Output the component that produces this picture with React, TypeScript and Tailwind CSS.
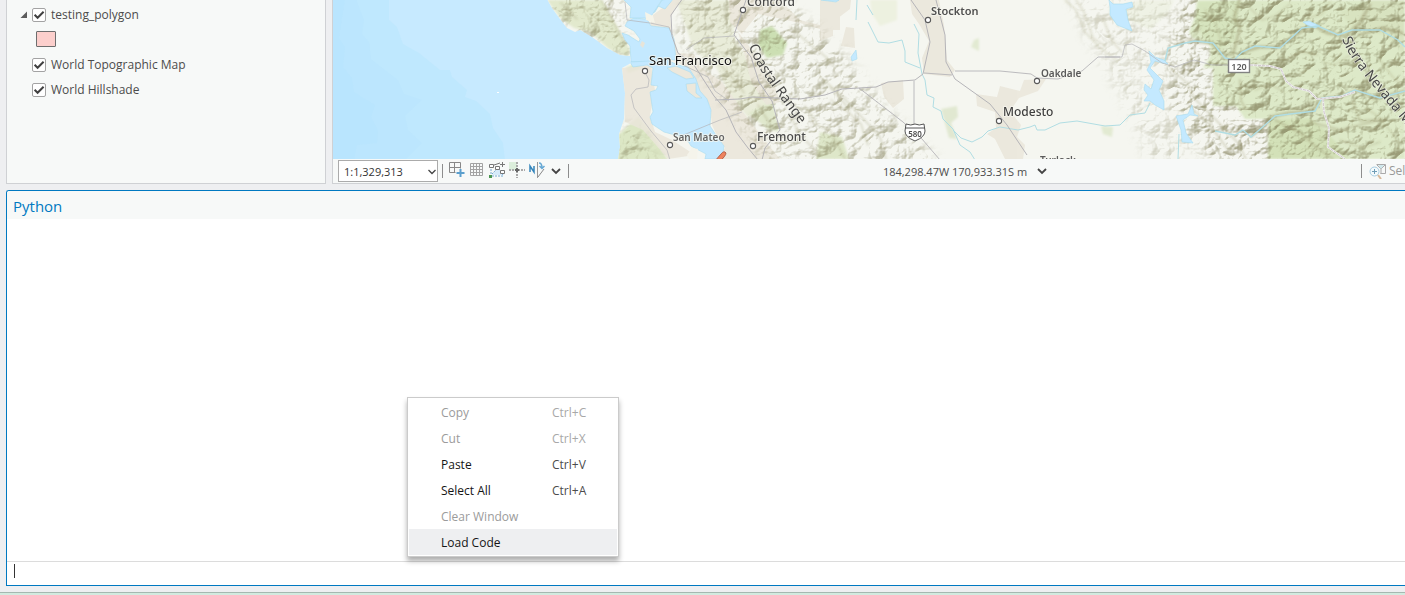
import type { ReactNode } from "react";

function Check({ label }: { label: string }) {
  return (
    <label className="flex items-center gap-[5px] text-xs text-[#4c4c4c]">
      <span className="relative flex size-3.5">
        <input
          type="checkbox"
          defaultChecked
          className="peer size-3.5 appearance-none rounded-[2px] border border-[#a3a3a3] bg-white"
        />
        <svg
          viewBox="0 0 14 14"
          className="pointer-events-none absolute inset-0 size-3.5 opacity-0 peer-checked:opacity-100"
          fill="none"
          stroke="#404040"
          strokeWidth="2"
        >
          <path d="M2.6 6.8 5.6 9.8 11.6 3.8" />
        </svg>
      </span>
      {label}
    </label>
  );
}

function Contents() {
  return (
    <aside className="w-80 shrink-0 border-x border-b border-[#cfd1d4] bg-[#f7f9f8] pt-0.5">
      <ul>
        <li>
          <div className="flex h-[25px] items-center gap-1 pl-[13px]">
            <button aria-label="Collapse testing_polygon" className="flex w-2">
              <svg viewBox="0 0 8 8" className="size-2">
                <path d="M7 0.500v6.500H.5z" fill="#5c5c5c" />
              </svg>
            </button>
            <Check label="testing_polygon" />
          </div>
          <div className="flex h-[25px] items-center pb-px pl-[29px]">
            <span className="h-4 w-5 rounded-[1px] border border-[#6e6e6e] bg-[#fccfcc]" />
          </div>
        </li>
        <li className="flex h-[25px] items-center pl-[25px]">
          <Check label="World Topographic Map" />
        </li>
        <li className="flex h-[25px] items-center pl-[25px]">
          <Check label="World Hillshade" />
        </li>
      </ul>
    </aside>
  );
}

const cities = [
  { name: "Concord", x: 747, y: 6, cx: 743, cy: 10, size: 12, weight: 500, color: "#4a4a4a" },
  { name: "San Francisco", x: 649, y: 65, cx: 645, cy: 71, size: 13, weight: 400, color: "#101010" },
  { name: "San Mateo", x: 673, y: 141, cx: 670, cy: 145, size: 10, weight: 600, color: "#666" },
  { name: "Fremont", x: 757, y: 141, cx: 753, cy: 146, size: 12, weight: 500, color: "#4a4a4a" },
  { name: "Stockton", x: 931, y: 15, cx: 928, cy: 20, size: 11, weight: 600, color: "#4f4f4f" },
  { name: "Oakdale", x: 1041, y: 77, cx: 1037, cy: 81, size: 10, weight: 600, color: "#5a5a5a" },
  { name: "Modesto", x: 1003, y: 116, cx: 999, cy: 121, size: 12, weight: 500, color: "#3f3f3f" },
  { name: "Turlock", x: 1040, y: 164, cx: 1035, cy: 168, size: 10, weight: 600, color: "#5a5a5a" },
];

function MapView() {
  return (
    <svg
      role="img"
      aria-label="Topographic map of central California"
      viewBox="333 0 1072 159"
      preserveAspectRatio="xMinYMin slice"
      className="block h-[159px] w-full bg-[#c7eaff] font-['Noto_Sans',sans-serif]"
    >
      <defs>
        <filter id="relief" x="0" y="0" width="100%" height="100%" colorInterpolationFilters="sRGB">
          <feTurbulence type="turbulence" baseFrequency="0.035 0.045" numOctaves="4" seed="12" />
          <feColorMatrix values="0 0 0 0 0 0 0 0 0 0 0 0 0 0 0 1 0 0 0 0" />
          <feGaussianBlur stdDeviation="0.5" />
          <feDiffuseLighting surfaceScale="6" diffuseConstant="1" lightingColor="#fff">
            <feDistantLight azimuth="225" elevation="45" />
          </feDiffuseLighting>
          <feColorMatrix values="0 0 0 0 0.5 0 0 0 0 0.49 0 0 0 0 0.34 -0.95 0 0 0 0.7" />
        </filter>
        <filter id="soft" x="-20%" y="-20%" width="140%" height="140%">
          <feGaussianBlur stdDeviation="6" />
        </filter>
        <filter id="fine" x="-5%" y="-5%" width="110%" height="110%">
          <feGaussianBlur stdDeviation="0.8" />
        </filter>
        <mask id="hills" maskUnits="userSpaceOnUse" x="333" y="0" width="1072" height="159">
          <g filter="url(#soft)">
            <path d="M545-10 620-10 625 20 630 55 610 55 540 5Z" fill="#ccc" />
            <path d="M618 130 632 125 662 165 615 165Z" fill="#aaa" />
            <path d="M690-10 775-10 840 50 880 100 940 165 765 165 745 130 720 95 690 55 675 40Z" fill="#bbb" />
            <path d="M1065-10 1195-10 1195 165 1150 165 1120 95 1085 35Z" fill="#666" />
            <path d="M1190-10 1420-10 1420 170 1215 170 1175 100 1170 45Z" fill="#fff" />
          </g>
        </mask>
        <clipPath id="land">
          <path d="M547-1H1406V160H618L620 147 619 134 624 119 625 93 622 68 631 63 630 56 620 55 607 48 592 37 580 30 575 32 567 28 560 19 552 8Z" />
        </clipPath>
        <path id="coastal-line" d="M749 46C755 66 775 91 806 133" />
        <path id="sierra-line" d="M1342 39C1351 63 1376 89 1412 132" />
      </defs>

      {/* Ocean depth bands */}
      <path d="M389-1H333V160H505L503 143 493 128 490 114 476 101 465 97 467 90 452 77 450 70 440 70 419 53 403 44 397 27 389 20Z" fill="#bfe8fe" />
      <path d="M356-1H333V160H405L422 143 408 130 405 116 422 100 404 94 398 80 371 59 369 42 362 34 364 20Z" fill="#bbe6fe" opacity=".7" />
      <path d="M345-1H333V160H354L357 145 377 143 378 130 371 117 375 105 354 92 352 78 343 67 345 47 339 38Z" fill="#b7e4fe" opacity=".6" />
      <path d="M497 92h2v1h-2z" fill="#fff" />

      <g clipPath="url(#land)">
        <rect x="540" y="0" width="865" height="159" fill="#f5f6f0" />

        {/* Vegetation */}
        <g filter="url(#fine)">
          <path d="M547 0H602L620 32 630 50 628 57 609 49 590 32 574 28 560 18Z" fill="#e2e9cd" />
          <path d="M676 0H730L735 40 752 65 770 100 748 118 730 95 716 67 694 50Z" fill="#e9ecd9" />
          <path d="M760 30 772 26 787 43 783 55 767 58 758 46Z" fill="#ccdfb3" />
          <path d="M618 135 638 117 649 129 668 160H614Z" fill="#dce7c5" />
          <path d="M626 68 640 62 640 69 628 73Z" fill="#d9e7c4" />
          <path d="M748 113 773 100 779 132 767 129Z" fill="#e0e8cd" />
          <path d="M870 0H897V20L880 26 872 14Z" fill="#edf1e0" />
          <path d="M820 132 842 137 849 159H816Z" fill="#dee7c9" />
          <path d="M941 109 957 106 958 117 951 123 957 139 949 138Z" fill="#e1e8d1" />
          <path d="M974 40 979 38 979 51 971 47ZM1101 126 1113 127 1112 137 1103 134Z" fill="#e2ead2" />
          <path d="M1197 0H1405V159H1268V119H1245L1236 106H1213V68L1203 68 1210 57 1210 45 1192 38 1189 32 1195 16Z" fill="#dde9c8" />
          <path d="M1198 2 1240 0 1235 40 1219 50 1206 42 1195 20Z" fill="#d6e4be" />
          <path d="M1270 120 1310 118 1325 130 1350 159H1268Z" fill="#d3e1b8" />
          <path d="M1370 0H1405V55L1385 35 1352 28 1340 12Z" fill="#d8e3c0" />
          <path d="M1107 10 1140 0 1174 0 1169 12 1150 30Z" fill="#eff2e5" />
        </g>

        {/* Towns */}
        <g fill="#eae6da" opacity=".85">
          <path d="M622 68 651 65 655 90 650 115 655 132 672 140 695 155 668 159 643 130 625 122Z" />
          <path d="M673 0H681L670 18 672 31 678 53 694 54 702 68 722 82 736 101 743 112 771 148 780 159H715L725 148 718 138 712 125 710 106 696 90 682 65 674 59 669 28 650 26 653 15Z" />
          <path d="M729 0H780L800 20 820 25 827 5 840 0V30L823 30 800 23 758 14 742 34 730 22ZM738 32 756 55 772 77 780 102 766 105 751 82 746 60Z" />
          <path d="M820 0 851 0 850 9 833 22 833 36 820 41ZM846 27 854 28 855 48 841 46Z" />
          <path d="M910 0H939L944 25 947 60 955 70 950 77 924 74 922 58 929 41 919 24 912 14Z" />
          <path d="M881 83 903 80 904 99 893 108 884 97Z" />
          <path d="M976 94 997 97 1000 86 1020 91 1024 80 1046 79 1038 91 1019 98 1010 111 1021 125 1017 137 1025 145 1023 159H1005L995 139 987 134 996 128 995 112 977 106Z" />
        </g>

        <rect x="540" y="0" width="865" height="159" filter="url(#relief)" mask="url(#hills)" />

        {/* Ridge and canyon shading */}
        <g fill="none" stroke="#9e9b72" strokeLinecap="round" strokeLinejoin="round" filter="url(#fine)">
          <path d="M1240-2 1234 18 1240 28 1233 54 1222 55 1212 43 1190 41" strokeWidth="3" opacity=".5" />
          <path d="M1242 52 1260 47 1278 47 1302 31 1313 25 1327 33 1345 36 1359 24 1370 5M1359 35 1383 28 1402 33" strokeWidth="3" opacity=".55" />
          <path d="M1405 91 1375 99 1360 90 1338 97 1320 99 1313 111 1288 113 1271 117 1265 126 1251 136" strokeWidth="3" opacity=".5" />
          <path d="M1275 120 1300 133 1320 150 1333 159M1310 122 1340 130 1380 120M1353 101 1360 121 1385 119M1240 80 1241 101 1246 109" strokeWidth="2" opacity=".4" />
          <path d="M1170 68 1187 83 1194 98 1216 120 1238 143 1246 159M1189 106 1210 125 1229 151M1200 28 1192 38 1174 45" strokeWidth="1.5" opacity=".4" />
          <path d="M1065 0 1076 10 1085 32 1101 49 1117 60M1076 0 1084 12 1093 38 1105 46M1103 18 1111 40 1122 52" strokeWidth="1.5" opacity=".3" />
          <path d="M820 77 842 96 858 113 880 137 886 159M831 100 848 112 861 124 868 145M830 87 850 110" strokeWidth="1.5" opacity=".35" />
          <path d="M790 27 812 46 826 57 832 65M716 60 739 85 744 93M758 105 770 124M805 106 818 126 830 130 845 159M790 115 800 135 817 152M561 3 577 19M601 0 612 20 625 43" strokeWidth="1.5" opacity=".35" />
          <path d="M1205 10 1215 22 1222 44M1250 8 1262 20 1275 16 1290 4M1330 2 1322 14 1308 18M1285 60 1300 52 1318 55M1350 55 1335 65 1322 62M1380 60 1392 76 1400 84M1255 90 1270 84 1284 92M1365 108 1378 116 1396 138M1340 140 1362 148 1380 142" strokeWidth="1.5" opacity=".3" />
        </g>

        {/* Bays, reservoirs */}
        <g fill="#c4e9ff" stroke="#a9dbee" strokeWidth=".6">
          <path d="M674-2 665 9 658 6 652 13 645 19 634 18 627 22 625 26 634 31 640 39 639 42 628 35 622 33 625 40 630 46 631 62 648 62 663 59 676 60 674 39 669 28 651 26 645 16 655 12 662 0Z" />
          <path d="M622-2 631 7 630 18 650 18 663-2Z" />
          <path d="M645 12 653 16 655 23 646 20Z" fill="#f5f4e9" stroke="none" />
          <path d="M642 41 645 43 643 48 640 45Z" fill="#e7e4d9" stroke="none" />
          <path d="M630 62 667 60 678 65 688 67 696 79 700 91 707 99 711 110 710 126 718 138 724 146 722 159H705L706 154 691 146 686 138 664 132 652 124 650 117 653 112 650 92 656 90 658 86 651 85 653 68 647 65 633 67Z" />
          <path d="M667 68 676 66 690 72 694 78 686 79 672 72ZM686 84 696 83 696 93 702 98 696 98 687 91Z" fill="#ece8dc" />
          <path d="M687 155 692 148 698 149 697 159H689Z" fill="#f5f4eb" stroke="none" />
          <path d="M856 50 857 59 852 61 851 57ZM821 0 839 0 836 2Z" />
          <path d="M1109 0 1113 4 1123 4 1132 2 1133 7 1126 9 1128 20 1132 31 1127 29 1117 25 1110 15 1110 7Z" />
          <path d="M1149 51 1155 57 1164 60 1168 64 1162 63 1155 61 1150 68 1158 76 1163 81 1159 90 1164 101 1164 110 1155 105 1150 101 1144 101 1148 95 1144 90 1145 84 1151 89 1154 80 1147 70 1151 62Z" />
          <path d="M1192 105 1194 114 1198 116 1190 115 1183 120 1186 133 1193 143 1182 142 1181 130 1176 116 1188 114Z" />
          <path d="M1303 22 1309 21 1320 26 1315 28 1307 25Z" />
        </g>
        <g fill="none" stroke="#b0dde3" strokeWidth="1">
          <path d="M868 22 878 42 889 43 902 40 905 51 905 62 920 68M914 24 919 34 918 53 922 74 925 80 927 95 934 98 933 107 941 111 943 119 953 129 960 145 970 152 975 160" />
          <path d="M953 130 961 138 972 142 982 137 988 131 1000 127 1018 130 1030 127 1035 125 1037 130 1045 130 1060 123 1077 121 1105 126 1120 125 1130 115 1145 113 1150 103" />
          <path d="M857 0 856 20M867 5 873 15M1178 159 1179 134" />
          <path d="M1165 61 1168 48 1185 43 1195 41 1213 43 1225 58 1234 60 1242 52 1255 46 1280 48 1302 28 1318 26 1338 35 1352 30 1380 30 1398 40 1405 47" strokeWidth="1.4" />
          <path d="M1405 91 1380 98 1355 90 1342 96 1322 98 1315 111 1290 114 1275 116 1265 125 1251 137 1243 130 1235 135 1215 131" strokeWidth="1.4" />
        </g>

        {/* Highways */}
        <g fill="none" stroke="#b5b4b8" strokeWidth="1">
          <path d="M683-2 671 15 672 36 678 53 694 65 714 96 726 110 736 132 748 148 758 160M746 0 734 35 751 57 759 82 772 101 780 130 765 148 762 160" />
          <path d="M715 100 740 99 752 97 800 99 825 95 842 89 876 87 888 82 915 80 923 74 930 42 925 20 911 0M936 0 945 35 946 62 955 79 990 104 1007 125 1027 155" />
          <path d="M859 88 903 122 922 139 940 160M914 81V124M924 73 952 75M955 71 1000 71 1031 74 1037 78 1058 79 1082 71 1098 57 1120 57" strokeWidth=".9" />
          <path d="M1105 57 1122 57 1125 45 1132 44 1145 51 1162 63 1175 67 1194 60 1212 65 1228 65" strokeWidth=".7" />
          <path d="M645 72 649 80 648 87 636 89 631 95 634 108 651 131 667 150 670 160M625 2 627 20 650 23 669 27 672 35M681 136 720 120 742 112M686 50 704 38 734 36M683 65 708 77 715 91 729 101" strokeWidth=".7" />
        </g>
        <path d="M1250 65 1270 66 1281 69 1286 81 1293 87 1309 91 1317 99 1340 97 1355 92M1323 99 1324 112 1329 128 1328 147 1345 159" fill="none" stroke="#eee" strokeWidth="2" />
        <path d="M1250 65 1270 66 1281 69 1286 81 1293 87 1309 91 1317 99 1340 97 1355 92M1323 99 1324 112 1329 128 1328 147 1345 159" fill="none" stroke="#c5b9bc" strokeWidth=".7" strokeDasharray="3 1" />
      </g>

      <path d="M714 162 721 154Q724 150 726 153 726 156 719 162Z" fill="#ee825d" stroke="#a6543c" strokeWidth=".8" />

      {/* Route markers */}
      <rect x="1228.5" y="59.5" width="21" height="13" fill="#fff" stroke="#828282" strokeWidth="1.4" />
      <text x="1239" y="69.5" textAnchor="middle" fontSize="9" fontWeight="600" fill="#5b5b5b">120</text>
      <path d="M906 124Q911 126 915 124 919 126 924 124L925 131Q925 137 915 141 905 137 905 131Z" fill="#fff" stroke="#555" />
      <path d="M905 128H925" stroke="#555" />
      <text x="915" y="137" textAnchor="middle" fontSize="8" fontWeight="600" fill="#4b4b4b">580</text>

      {/* Place names */}
      <g stroke="#f7f7f0" strokeWidth="2" strokeOpacity=".75" strokeLinejoin="round" paintOrder="stroke">
        {cities.map((city) => (
          <g key={city.name}>
            <circle cx={city.cx} cy={city.cy} r="2.6" fill="#fff" stroke="#595959" strokeWidth="1.1" strokeOpacity="1" paintOrder="normal" />
            <text x={city.x} y={city.y} fontSize={city.size} fontWeight={city.weight} fill={city.color}>{city.name}</text>
          </g>
        ))}
      </g>
      <g fill="#484848" fontSize="14" stroke="#f3f4e9" strokeWidth="1.5" strokeOpacity=".6" paintOrder="stroke">
        <text><textPath href="#coastal-line">Coastal Range</textPath></text>
        <text><textPath href="#sierra-line">Sierra Nevada Mts</textPath></text>
      </g>
    </svg>
  );
}

function Chevron() {
  return (
    <svg viewBox="0 0 10 10" className="size-2.5" fill="none" stroke="#444" strokeWidth="1.8">
      <path d="M1 3 5 7 9 3" />
    </svg>
  );
}

function ToolButton({ label, children }: { label: string; children: ReactNode }) {
  return (
    <button aria-label={label} className="flex">
      <svg viewBox="0 0 16 16" className="size-4" fill="none">{children}</svg>
    </button>
  );
}

function MapToolbar() {
  return (
    <div className="flex h-6 items-center bg-[#f7f9f8] pl-[5px] text-[11px] text-[#4c4c4c]">
      <div className="relative h-[22px] w-[100px] shrink-0">
        <select
          aria-label="Map scale"
          className="block h-full w-full appearance-none border border-[#ababab] bg-white pt-0.5 pl-[5px] text-[11px] text-[#333]"
        >
          <option>1:1,329,313</option>
        </select>
        <svg viewBox="0 0 8 8" className="pointer-events-none absolute top-2 right-0.5 size-2" fill="none" stroke="#444" strokeWidth="1.3">
          <path d="M.5 2 4 5.5 7.5 2" />
        </svg>
      </div>
      <span className="ml-1 h-3.5 w-px shrink-0 bg-[#8d8d8d]" />
      <div className="ml-1.5 flex shrink-0 items-center gap-1 pb-0.5">
        <ToolButton label="New view">
          <path d="M.5.5h11v6M.5.5v10h6M5.500.5v10M.5 5.500h11" stroke="#888" />
          <path d="M11.500 7v8M7.500 11h8" stroke="#5b9fcd" strokeWidth="2" />
        </ToolButton>
        <ToolButton label="Grid">
          <path d="M1.500 1.500h12v12h-12zM4.500 1.500v12M7.500 1.500v12M10.500 1.500v12M1.500 4.500h12M1.500 7.500h12M1.500 10.500h12" stroke="#a3a3a3" />
        </ToolButton>
        <ToolButton label="Snapping">
          <path d="m3 13 6-7 5 7z" fill="#d5eafa" />
          <path d="M2 12V6M3 14h12M3 12l6-6 5 7" stroke="#75a9d3" strokeDasharray="2 1" />
          <path d="M.5 2.500h4v3h-4zM6.500 4.500h4v3h-4zM11.500 8.500h4v3h-4z" fill="#fff" stroke="#777" />
          <path d="m5 3 6-2M13.500 0v5M11 2.500h5" stroke="#777" />
          <path d="M0 13h3v3H0z" fill="#4b9650" />
        </ToolButton>
        <ToolButton label="Dynamic constraints">
          <path d="M0 0h8v8H0z" fill="#dceedb" />
          <path d="M0 8h16M8 0v16" stroke="#aaa" strokeWidth="2" strokeDasharray="2 1" />
          <path d="M6 8h4M8 6v4" stroke="#666" strokeWidth="2" />
        </ToolButton>
        <ToolButton label="Rotation">
          <path d="M1 10V4l4 6V4" stroke="#3585bb" strokeWidth="1.5" />
          <path d="M8.500 0v16" stroke="#999" />
          <path d="m9 15 6-8" stroke="#888" />
          <path d="M10 1q3 0 3 5m-2.500-2L13 6.500 15.500 4" stroke="#66a8d4" strokeWidth="1.500" />
        </ToolButton>
      </div>
      <button aria-label="More map tools" className="ml-1.5 flex shrink-0"><Chevron /></button>
      <span className="ml-[7px] h-3.5 w-px shrink-0 bg-[#8d8d8d]" />
      <button className="flex flex-1 items-center justify-center gap-2.5 whitespace-nowrap">
        <span className="pt-0.5">184,298.47W 170,933.31S m</span>
        <Chevron />
      </button>
      <div className="flex w-11 shrink-0 items-center overflow-hidden whitespace-nowrap text-xs text-[#999]">
        <span className="h-3.5 w-px shrink-0 bg-[#8d8d8d]" />
        <svg viewBox="0 0 18 16" className="ml-[7px] h-4 w-[18px] shrink-0" fill="none">
          <path d="M7.500 1.500h9v9h-5M8 2l4 4 4-4M12 6v5" stroke="#aaa" />
          <path d="m9 2 3 4 3-4Z" fill="#cfe8ec" />
          <circle cx="5.500" cy="8.500" r="4.500" fill="#f3fafc" stroke="#a6cde1" />
          <path d="M5.500 6v5M3 8.500h5" stroke="#6f9db7" />
          <path d="m9 12 3 4" stroke="#d7b99a" strokeWidth="2" />
        </svg>
        <span className="ml-0.5">Selected Features: 0</span>
      </div>
    </div>
  );
}

const menuItems = [
  { label: "Copy", keys: "Ctrl+C", disabled: true },
  { label: "Cut", keys: "Ctrl+X", disabled: true },
  { label: "Paste", keys: "Ctrl+V" },
  { label: "Select All", keys: "Ctrl+A" },
  { label: "Clear Window", disabled: true },
  { label: "Load Code", active: true },
];

function ContextMenu() {
  return (
    <div
      role="menu"
      className="absolute top-[397px] left-[407px] w-[212px] border border-[#cbcbcb] bg-white p-px text-xs shadow-[0_4px_5px_rgba(0,0,0,0.32)]"
    >
      {menuItems.map((item) => (
        <button
          key={item.label}
          role="menuitem"
          disabled={item.disabled}
          className={`flex h-[26px] w-full items-center pt-0.5 pl-8 text-left ${item.disabled ? "text-[#9b9b9b]" : "text-[#151515]"} ${item.active ? "bg-[#eeeff1]" : ""}`}
        >
          <span className="w-[111px]">{item.label}</span>
          <span className={item.disabled ? "text-[#a8a8a8]" : "text-[#4c4c4c]"}>{item.keys}</span>
        </button>
      ))}
    </div>
  );
}

export default function App() {
  return (
    <div className="relative flex h-screen min-h-[400px] flex-col overflow-hidden bg-[#eeeff1] font-['Open_Sans','Noto_Sans',sans-serif]">
      <div className="flex shrink-0 gap-1.5 pl-1.5">
        <Contents />
        <main className="min-w-0 flex-1 border-b border-l border-[#cfd1d4]">
          <MapView />
          <MapToolbar />
        </main>
      </div>
      <section className="mt-1.5 ml-1.5 flex min-h-0 flex-1 flex-col rounded-tl-[3px] border-y border-l border-[#0079c1] bg-white">
        <h2 className="flex h-7 shrink-0 items-center rounded-tl-[2px] bg-[#f7f9f8] pt-0.5 pl-1.5 text-[15px] text-[#007ac2]">
          Python
        </h2>
        <div className="flex-1" />
        <div className="flex h-6 shrink-0 items-center border-t border-[#dcdcdc] pl-[7px]">
          <span className="mb-1.5 h-3.5 w-px bg-[#333]" />
          <input aria-label="Python command" className="min-w-0 flex-1 text-xs outline-none" />
        </div>
      </section>
      <footer className="mt-1.5 h-[3px] shrink-0 border-t border-[#a5b8b0] bg-[#d2eadf]" />
      <ContextMenu />
    </div>
  );
}
